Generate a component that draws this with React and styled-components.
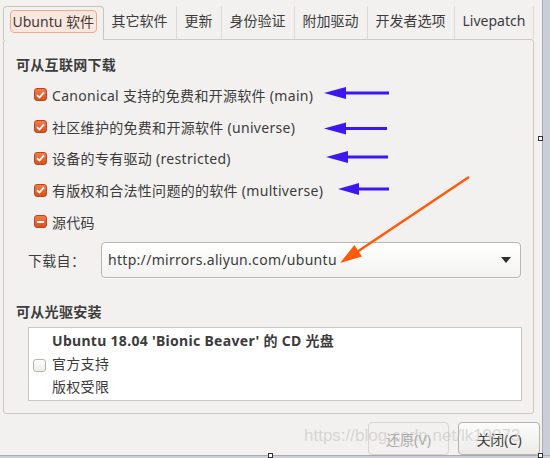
import React from 'react';
import styled, { createGlobalStyle, css } from 'styled-components';

const tabs = ['Ubuntu 软件', '其它软件', '更新', '身份验证', '附加驱动', '开发者选项', 'Livepatch'];

const sources = [
	{ label: 'Canonical 支持的免费和开源软件 (main)', state: 'checked' },
	{ label: '社区维护的免费和开源软件 (universe)', state: 'checked' },
	{ label: '设备的专有驱动 (restricted)', state: 'checked' },
	{ label: '有版权和合法性问题的的软件 (multiverse)', state: 'checked' },
	{ label: '源代码', state: 'mixed' },
];

const App = () => {
	return (
		<>
			<GlobalStyle />
			<Screen>
				<Main>
					<Window>
						<TabBar>
							{tabs.map((t, i) => (
								<Tab key={t} active={i === 0}>
									<TabLabel active={i === 0}>{t}</TabLabel>
								</Tab>
							))}
						</TabBar>
						<Panel>
							<SectionTitle>可从互联网下载</SectionTitle>
							<CheckList>
								{sources.map((s) => (
									<CheckRow key={s.label}>
										<CheckBox state={s.state}>
											{s.state === 'checked' && (
												<svg width="9" height="8" viewBox="0 0 9 8">
													<path d="M1 4.2 L3.4 6.5 L8 1.3" fill="none" stroke="#fff" strokeWidth="1.8" />
												</svg>
											)}
											{s.state === 'mixed' && <MixedBar />}
										</CheckBox>
										<span>{s.label}</span>
									</CheckRow>
								))}
							</CheckList>
							<SourceRow>
								<FieldLabel>下载自：</FieldLabel>
								<Combo>
									<span>http://mirrors.aliyun.com/ubuntu</span>
									<Caret />
								</Combo>
							</SourceRow>
							<SectionTitle second>可从光驱安装</SectionTitle>
							<CdBox>
								<CheckBox state="off" />
								<CdLines>
									<strong>Ubuntu 18.04 'Bionic Beaver' 的 CD 光盘</strong>
									<span>官方支持</span>
									<span>版权受限</span>
								</CdLines>
							</CdBox>
						</Panel>
						<ButtonRow>
							<DialogButton disabled>还原(V)</DialogButton>
							<DialogButton>关闭(C)</DialogButton>
						</ButtonRow>
					</Window>
					<SideStrip />
				</Main>
				<BottomStrip />
				<Annotations width="550" height="458" viewBox="0 0 550 458">
					<g fill="#3b17f2" stroke="#3b17f2">
						<line x1="340" y1="93" x2="389" y2="93" strokeWidth="3" />
						<polygon points="324,93 346,87 346,99" stroke="none" />
						<line x1="340" y1="128.5" x2="387" y2="128.5" strokeWidth="3" />
						<polygon points="324,128.5 346,122.5 346,134.5" stroke="none" />
						<line x1="342" y1="157" x2="388" y2="157" strokeWidth="3" />
						<polygon points="326,157 348,151 348,163" stroke="none" />
						<line x1="354" y1="189" x2="389" y2="189" strokeWidth="3" />
						<polygon points="338,189 359,183 359,195" stroke="none" />
					</g>
					<line x1="469" y1="177" x2="354" y2="254" stroke="#ff5a0a" strokeWidth="2.5" />
					<polygon points="340,263 362,256.6 354.4,245" fill="#ff5a0a" />
				</Annotations>
				<Watermark>https://blog.csdn.net/lk19073</Watermark>
				<Handle style={{ left: 538, top: 136 }} />
				<Handle style={{ left: 268, top: 453 }} />
				<Handle style={{ left: 538, top: 453 }} />
			</Screen>
		</>
	);
};

const GlobalStyle = createGlobalStyle`
	html, body {
		margin: 0;
		padding: 0;
		background: #f2f1f0;
	}
	body {
		font-family: "Noto Sans", "Noto Sans CJK SC", sans-serif;
		font-size: 14px;
		color: #3c3c3c;
	}
`;

const Screen = styled.div`
	position: relative;
	width: 550px;
	height: 458px;
	overflow: hidden;
	display: flex;
	flex-direction: column;
`;

const Main = styled.div`
	display: flex;
	height: 455px;
`;

const Window = styled.div`
	width: 542px;
	display: flex;
	flex-direction: column;
	background: #f2f1f0;
	border-right: 1px solid #a9abb0;
`;

const SideStrip = styled.div`
	flex: 1;
	background: #c9ced9;
`;

const BottomStrip = styled.div`
	flex: 1;
	background: #c9ced9;
	border-top: 1px solid #a9abb0;
`;

const TabBar = styled.div`
	display: flex;
	align-items: flex-end;
	height: 39px;
	padding-left: 3px;
`;

const Tab = styled.div`
	box-sizing: border-box;
	height: 33px;
	padding: 3px 6px 0;
	border-right: 1px solid #dedbd7;
	${(p) =>
		p.active &&
		css`
			position: relative;
			z-index: 1;
			height: 34px;
			margin-bottom: -1px;
			padding: 3px 6px 0;
			border: 1px solid #c9c6c1;
			border-bottom: none;
			border-radius: 4px 4px 0 0;
			background: #f2f1f0;
		`}
`;

const TabLabel = styled.div`
	height: 23px;
	box-sizing: border-box;
	line-height: 21px;
	padding: 0 1px;
	border: 1px solid transparent;
	border-radius: 4px;
	white-space: nowrap;
	${(p) =>
		p.active &&
		css`
			padding: 0 1.5px;
			border-color: #f2a88b;
			background: #fce7de;
		`}
`;

const Panel = styled.div`
	box-sizing: border-box;
	width: 531px;
	height: 375px;
	margin-left: 3px;
	padding: 15px 12px 0 12px;
	border: 1px solid #cdcac5;
	border-radius: 3px;
	letter-spacing: 0.3px;
`;

const SectionTitle = styled.div`
	font-weight: bold;
	line-height: 20px;
	margin-top: ${(p) => (p.second ? '24px' : '0')};
`;

const CheckList = styled.div`
	display: flex;
	flex-direction: column;
	margin: 4px 0 0 18px;
`;

const CheckRow = styled.div`
	display: flex;
	align-items: center;
	height: 31.75px;
	gap: 5px;
	white-space: nowrap;
`;

const CheckBox = styled.div`
	box-sizing: border-box;
	width: 13px;
	height: 13px;
	flex: none;
	border-radius: 3px;
	display: flex;
	align-items: center;
	justify-content: center;
	${(p) =>
		p.state === 'off'
			? css`
					background: linear-gradient(#fdfdfd, #eeedec);
					border: 1px solid #b6b3ae;
			  `
			: css`
					background: linear-gradient(#f27b4e, #db4f1e);
					border: 1px solid #b9461c;
			  `}
`;

const MixedBar = styled.div`
	width: 7px;
	height: 2px;
	background: #fff;
`;

const SourceRow = styled.div`
	display: flex;
	align-items: center;
	margin: 4px 0 0 12px;
`;

const FieldLabel = styled.div`
	width: 73px;
	flex: none;
`;

const Combo = styled.div`
	box-sizing: border-box;
	width: 420px;
	height: 36px;
	display: flex;
	align-items: center;
	justify-content: space-between;
	padding: 0 9px 0 6px;
	border: 1px solid #bab7b2;
	border-radius: 4px;
	background: linear-gradient(#ffffff, #f3f2f1);
	box-shadow: 0 1px 0 rgba(255, 255, 255, 0.6);
`;

const Caret = styled.div`
	width: 0;
	height: 0;
	border-left: 5px solid transparent;
	border-right: 5px solid transparent;
	border-top: 6px solid #2e2e2e;
`;

const CdBox = styled.div`
	box-sizing: border-box;
	width: 494px;
	height: 74px;
	margin: 5px 0 0 12px;
	padding: 3px 0 0 4px;
	display: flex;
	align-items: center;
	gap: 6px;
	background: #fff;
	border: 1px solid #cac8c4;
`;

const CdLines = styled.div`
	display: flex;
	flex-direction: column;
	line-height: 23px;
	margin-top: -4px;
	strong {
		font-weight: bold;
	}
`;

const ButtonRow = styled.div`
	display: flex;
	justify-content: flex-end;
	gap: 9px;
	padding: 8px 2px 0 0;
`;

const DialogButton = styled.div`
	box-sizing: border-box;
	width: 82px;
	height: 33px;
	display: flex;
	align-items: center;
	justify-content: center;
	border-radius: 4px;
	border: 1px solid #b7b3ad;
	background: linear-gradient(#fcfcfc, #ecebe8);
	color: #3c3c3c;
	${(p) =>
		p.disabled &&
		css`
			width: 81px;
			border-color: #d8d5d1;
			background: #f2f1f0;
			color: #adaba7;
		`}
`;

const Annotations = styled.svg`
	position: absolute;
	left: 0;
	top: 0;
	pointer-events: none;
`;

const Watermark = styled.div`
	position: absolute;
	left: 304px;
	top: 426px;
	font-family: "Liberation Sans", sans-serif;
	font-size: 17px;
	color: rgba(185, 185, 185, 0.5);
	white-space: nowrap;
	pointer-events: none;
`;

const Handle = styled.div`
	position: absolute;
	width: 5px;
	height: 5px;
	box-sizing: border-box;
	background: #fff;
	border: 1px solid #333;
`;

export default App;
